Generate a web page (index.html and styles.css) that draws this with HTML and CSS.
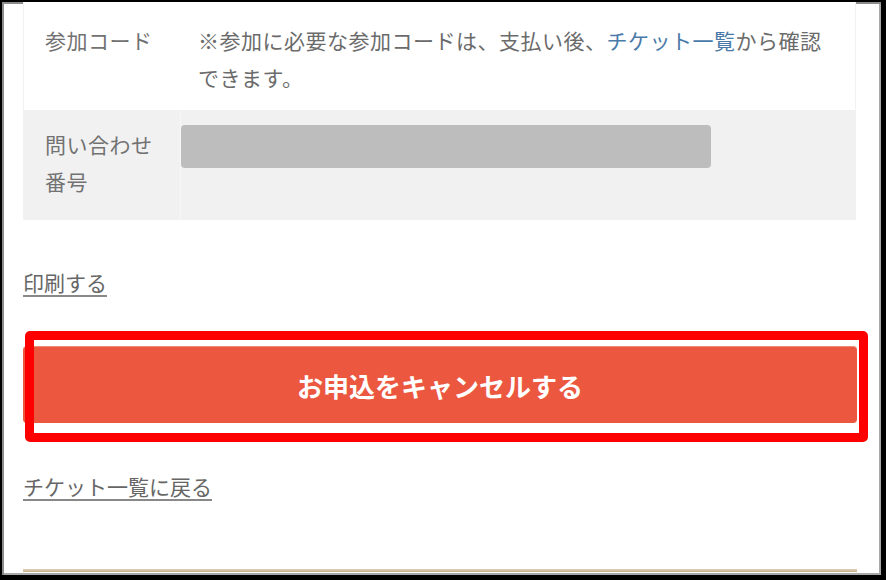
FILE: index.html
```html
<!DOCTYPE html>
<html lang="ja">
<head>
<meta charset="utf-8">
<title>チケット詳細</title>
<link rel="stylesheet" href="styles.css">
</head>
<body>
<div class="frame">
  <div class="info">
    <div class="row row-code">
      <div class="label">参加コード</div>
      <div class="value">※参加に必要な参加コードは、支払い後、<span class="link-text">チケット一覧</span>から確認<br>できます。</div>
    </div>
    <div class="row row-inquiry">
      <div class="label">問い合わせ<br>番号</div>
      <div class="value value-masked"><div class="mask"></div></div>
    </div>
  </div>
  <div class="print"><a class="text-link" href="#">印刷する</a></div>
  <button class="cancel-btn" type="button">お申込をキャンセルする</button>
  <div class="back"><a class="text-link" href="#">チケット一覧に戻る</a></div>
  <div class="footer-line"></div>
  <div class="highlight"></div>
</div>
</body>
</html>
```

FILE: styles.css
```css
html, body {
  margin: 0;
  padding: 0;
  background: #fff;
}

.frame {
  position: relative;
  width: 886px;
  height: 580px;
  box-sizing: border-box;
  border-left: 2px solid #000;
  border-top: 2px solid #000;
  border-right: 5px solid #000;
  border-bottom: 5px solid #000;
  box-shadow: inset 2px 2px 0 #8c8c8c, inset -2px -2px 0 #a8a8a8;
  padding: 0 24px 0 21px;
  font-family: "Noto Sans CJK JP", "Noto Sans", sans-serif;
  font-size: 21px;
  color: #6b6b6b;
  overflow: hidden;
}

.info {
  width: 833px;
  border-left: 1px solid #f2f2f2;
  border-right: 1px solid #f2f2f2;
  box-sizing: border-box;
}

.row {
  display: flex;
}

.row-code {
  height: 108px;
  background: #fff;
}

.row-inquiry {
  height: 110px;
  background: #f1f1f1;
}

.label {
  width: 156px;
  flex: none;
  box-sizing: border-box;
  padding-left: 21px;
  line-height: 37px;
  letter-spacing: 0.5px;
  color: #727272;
}

.row-code .label,
.row-code .value {
  padding-top: 20px;
}

.row-inquiry .label {
  padding-top: 16px;
}

.value {
  flex: 1;
  box-sizing: border-box;
  padding-left: 18px;
  padding-right: 20px;
  line-height: 37px;
  letter-spacing: 0.5px;
}

.link-text {
  color: #4a7aa8;
}

.value-masked {
  padding: 15px 0 0 0;
  border-left: 1px solid #f6f6f6;
}

.mask {
  width: 530px;
  height: 43px;
  background: #bdbdbd;
  border-radius: 4px;
}

.print {
  margin-top: 44px;
  line-height: 37px;
}

.text-link {
  color: #666;
  text-decoration: underline;
  text-underline-offset: 4px;
  text-decoration-color: #888;
}

.cancel-btn {
  display: block;
  width: 834px;
  height: 77px;
  margin-top: 45px;
  padding: 0;
  border: none;
  border-top: 1px solid #f08a78;
  border-radius: 4px;
  background: #ec5740;
  color: #fff;
  font-family: "Noto Sans CJK JP", "Noto Sans", sans-serif;
  font-size: 26px;
  font-weight: 700;
  letter-spacing: 0;
  cursor: pointer;
}

.back {
  margin-top: 45px;
  line-height: 37px;
}

.footer-line {
  margin-top: 64px;
  width: 834px;
  height: 3px;
  background: linear-gradient(#e0d2b8, #c4b08e);
}

.highlight {
  position: absolute;
  left: 23px;
  top: 329px;
  width: 843px;
  height: 111px;
  box-sizing: border-box;
  border: 9px solid #ff0000;
  border-radius: 5px;
  pointer-events: none;
}
```
